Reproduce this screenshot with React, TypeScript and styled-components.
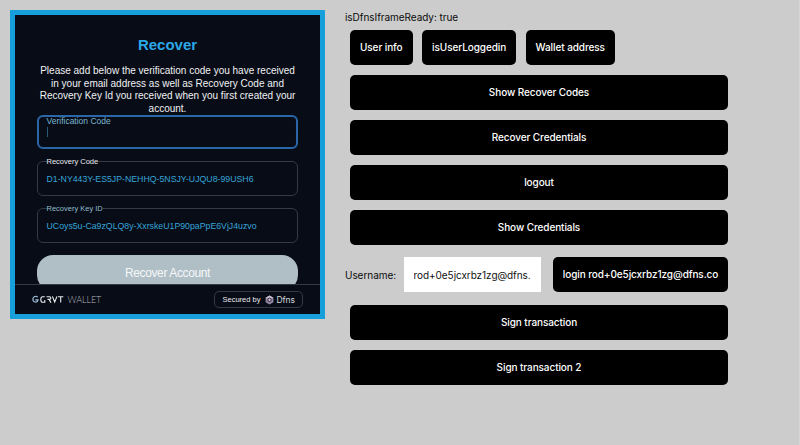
import React from 'react';
import styled, { createGlobalStyle } from 'styled-components';

const GlobalStyle = createGlobalStyle`
  * { box-sizing: border-box; }
  body { margin: 0; background: #ccc; overflow: hidden; }
`;

const Page = styled.main`
  display: flex;
  align-items: flex-start;
  gap: 20px;
  width: 800px;
  height: 445px;
  padding: 10px 0 0 10px;
  background: #ccc;
  border-right: 1px solid #d6d6d6;
  font-family: Inter, sans-serif;
  font-size: 10px;
  letter-spacing: -0.05px;
  color: #0b0b0b;
`;

const WalletFrame = styled.section`
  display: flex;
  flex-direction: column;
  flex: none;
  width: 315px;
  height: 309px;
  border: 5px solid #169fdb;
  background: #080c16;
  font-family: "Liberation Sans", Arial, sans-serif;
  letter-spacing: 0;
  overflow: hidden;
`;

const WalletBody = styled.div`
  flex: none;
  height: 269px;
  padding: 21px 22px 0;
  overflow: hidden;
`;

const Title = styled.h1`
  margin: 0;
  height: 29px;
  font-size: 15px;
  line-height: 18px;
  font-weight: 700;
  text-align: center;
  color: #2ba8e8;
`;

const Intro = styled.p`
  margin: 0;
  height: 50px;
  font-size: 10px;
  line-height: 12.5px;
  text-align: center;
  white-space: nowrap;
  color: #f0f2f4;
`;

const IntroLine = styled.span`
  display: block;
`;

const FocusedField = styled.div`
  width: 261px;
  height: 34px;
  padding: 0 0 0 7.5px;
  border: 2px solid #2a66a8;
  border-radius: 6px;
`;

const FocusedLabel = styled.div`
  height: 9px;
  font-size: 8.5px;
  line-height: 8px;
  color: #79b5d0;
`;

const Caret = styled.div`
  width: 1px;
  height: 10px;
  margin-top: 1px;
  background: #285a78;
`;

const Field = styled.fieldset`
  width: 261px;
  height: 39px;
  min-width: 0;
  margin: 8px 0 0;
  padding: 0 8.5px;
  border: 1px solid #343943;
  border-radius: 6px;
`;

const FieldLabel = styled.legend<{ $color: string }>`
  height: 9px;
  padding: 0;
  font-size: 7.5px;
  line-height: 9px;
  color: ${(p) => p.$color};
`;

const FieldValue = styled.div`
  margin-top: 7px;
  font-size: 8.75px;
  line-height: 12px;
  white-space: nowrap;
  color: #36a5d8;
`;

const RecoverButton = styled.button`
  display: block;
  width: 261px;
  height: 36px;
  margin-top: 12px;
  padding: 0;
  border: 0;
  border-radius: 16px;
  background: #b0bec5;
  color: #f5f8fa;
  font: 12px/36px "Liberation Sans", Arial, sans-serif;
  letter-spacing: -0.38px;
`;

const WalletFooter = styled.footer`
  display: flex;
  align-items: center;
  justify-content: space-between;
  height: 30px;
  padding: 0 17px;
  border-top: 1px solid #343943;
`;

const SecuredBadge = styled.div`
  display: flex;
  align-items: center;
  width: 89px;
  height: 17px;
  padding-left: 7.5px;
  border: 1px solid #343943;
  border-radius: 5px;
  font-size: 7.5px;
  white-space: nowrap;
  color: #e8e9ed;
`;

const DfnsName = styled.span`
  font-family: Inter, sans-serif;
  font-size: 8.5px;
  letter-spacing: -0.1px;
  color: #d5d7dd;
`;

const DfnsIcon = styled.svg`
  flex: none;
  margin: 0 2px 0 5px;
`;

const Brand = styled.div`
  display: flex;
  align-items: center;
`;

const WalletWord = styled.span`
  margin-left: 3.5px;
  font-family: Lato, sans-serif;
  font-size: 9px;
  line-height: 10px;
  font-weight: 300;
  letter-spacing: -0.1px;
  color: #b4b7be;
`;

const Panel = styled.section`
  width: 383px;
`;

const Status = styled.div`
  height: 20px;
  line-height: 15px;
`;

const ButtonRow = styled.div`
  display: flex;
  gap: 9.75px;
  padding-left: 5px;
`;

const ButtonStack = styled.div`
  display: flex;
  flex-direction: column;
  gap: 10px;
  padding: 10px 0 0 5px;
`;

const ActionButton = styled.button<{ $width?: number }>`
  flex: none;
  width: ${(p) => (p.$width ? `${p.$width}px` : '100%')};
  height: 35px;
  padding: 0;
  border: 0;
  border-radius: 5px;
  background: #000;
  color: #fff;
  font: 500 10px/35px Inter, sans-serif;
  letter-spacing: -0.09px;
  white-space: nowrap;
`;

const LoginRow = styled.div`
  display: flex;
  align-items: center;
  height: 35px;
  margin: 12px 0 2.5px;
`;

const UsernameLabel = styled.label`
  width: 59px;
`;

const UsernameInput = styled.input`
  width: 136.5px;
  height: 35px;
  margin-right: 12.5px;
  padding: 0 9.5px;
  border: 0;
  border-radius: 0;
  background: #fff;
  color: #111;
  font: 10px Inter, sans-serif;
  letter-spacing: -0.06px;
`;

function GrvtLogo() {
  return (
    <svg width="32" height="9" viewBox="0 0 32 9" fill="none" aria-label="GRVT">
      <path d="M5.8 2C4 .8 1.2 1.2.9 3.9c-.3 3.4 4.4 4.5 5.2.9H3.3" stroke="#9bb9d1" strokeWidth="1.2" />
      <path d="M12.8 1.7h-2.1C9.2 1.7 8.8 2.8 8.8 4.4s.6 2.8 1.9 2.8h2.1V4.9" stroke="#e8eaee" strokeWidth="1.1" />
      <path d="M14.5 1.7h3c1.8 0 1.8 2.7 0 2.7h-2m1.6 0 1.9 3.2M20.4 1.4l2.3 5.6L25 1.4M26.1 1.7h5.2M28.7 1.7v5.9" stroke="#e8eaee" strokeWidth="1.1" />
    </svg>
  );
}

function CubeIcon() {
  return (
    <DfnsIcon width="9" height="10" viewBox="0 0 9 10">
      <path d="M4.5.4 8.4 2.7v4.5L4.5 9.6.6 7.2V2.7z" fill="#9187a0" />
      <path d="M4.5.4 8.4 2.7 4.5 5 .6 2.7z" fill="#cbbfd0" />
      <path d="m4.5 2.5 2 1.1v2.5L4.5 7.3l-2-1.2V3.6z" fill="#392d46" />
      <path d="m4.5 3.6 1 .5v1.4l-1 .7-1-.7V4.1z" fill="#d9ccdd" />
    </DfnsIcon>
  );
}

export default function App() {
  return (
    <>
      <GlobalStyle />
      <Page>
        <WalletFrame>
          <WalletBody>
            <Title>Recover</Title>
            <Intro>
              <IntroLine>Please add below the verification code you have received</IntroLine>
              <IntroLine>in your email address as well as Recovery Code and</IntroLine>
              <IntroLine>Recovery Key Id you received when you first created your</IntroLine>
              <IntroLine>account.</IntroLine>
            </Intro>
            <FocusedField>
              <FocusedLabel>Verification Code</FocusedLabel>
              <Caret />
            </FocusedField>
            <Field>
              <FieldLabel $color="#e8edf0">Recovery Code</FieldLabel>
              <FieldValue>D1-NY443Y-ES5JP-NEHHQ-5NSJY-UJQU8-99USH6</FieldValue>
            </Field>
            <Field>
              <FieldLabel $color="#91bed0">Recovery Key ID</FieldLabel>
              <FieldValue>UCoys5u-Ca9zQLQ8y-XxrskeU1P90paPpE6VjJ4uzvo</FieldValue>
            </Field>
            <RecoverButton>Recover Account</RecoverButton>
          </WalletBody>
          <WalletFooter>
            <Brand>
              <GrvtLogo />
              <WalletWord>WALLET</WalletWord>
            </Brand>
            <SecuredBadge>
              Secured by
              <CubeIcon />
              <DfnsName>Dfns</DfnsName>
            </SecuredBadge>
          </WalletFooter>
        </WalletFrame>
        <Panel>
          <Status>isDfnsIframeReady: true</Status>
          <ButtonRow>
            <ActionButton $width={62.5}>User info</ActionButton>
            <ActionButton $width={93.75}>isUserLoggedin</ActionButton>
            <ActionButton $width={89}>Wallet address</ActionButton>
          </ButtonRow>
          <ButtonStack>
            <ActionButton>Show Recover Codes</ActionButton>
            <ActionButton>Recover Credentials</ActionButton>
            <ActionButton>logout</ActionButton>
            <ActionButton>Show Credentials</ActionButton>
          </ButtonStack>
          <LoginRow>
            <UsernameLabel htmlFor="username">Username:</UsernameLabel>
            <UsernameInput id="username" defaultValue="rod+0e5jcxrbz1zg@dfns." />
            <ActionButton $width={175}>login rod+0e5jcxrbz1zg@dfns.co</ActionButton>
          </LoginRow>
          <ButtonStack>
            <ActionButton>Sign transaction</ActionButton>
            <ActionButton>Sign transaction 2</ActionButton>
          </ButtonStack>
        </Panel>
      </Page>
    </>
  );
}
